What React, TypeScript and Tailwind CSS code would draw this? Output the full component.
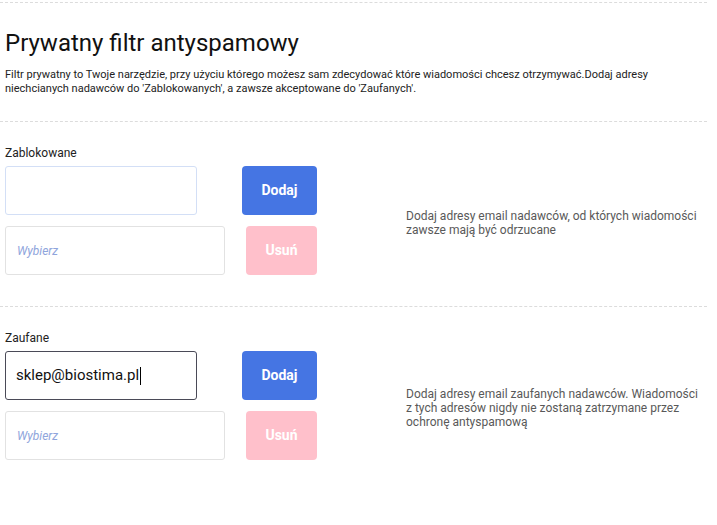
import React from "react";

type SectionProps = {
  label: string;
  value?: string;
  focused?: boolean;
  hint: string;
};

const FilterSection = ({ label, value, focused, hint }: SectionProps) => {
  return (
    <section className="pl-[5px]">
      <div className="mt-[24px] text-[12px] leading-[14px] text-[#222]">{label}</div>
      <div className="flex">
        <div className="w-[401px] shrink-0">
          {/* add row */}
          <div className="mt-[6px] flex">
            <div
              className={`flex h-[49px] w-[192px] items-center rounded-[3px] border bg-white pl-[10px] ${
                focused ? "border-[#4a4a57]" : "border-[#d3dff6]"
              }`}
            >
              {value && (
                <span className="flex items-center text-[15px] text-[#111]">
                  {value}
                  <span className="ml-[1px] inline-block h-[18px] w-[1px] bg-black" />
                </span>
              )}
            </div>
            <button
              type="button"
              className="ml-[45px] h-[49px] w-[75px] rounded-[4px] bg-[#4575e3] text-[14px] font-bold text-white"
            >
              Dodaj
            </button>
          </div>

          {/* remove row */}
          <div className="mt-[11px] flex">
            <div className="flex h-[49px] w-[220px] items-center rounded-[3px] border border-[#e2e2e2] bg-white pl-[11px]">
              <span className="text-[12px] italic text-[#8fa5dc]">Wybierz</span>
            </div>
            <button
              type="button"
              className="ml-[21px] h-[49px] w-[71px] rounded-[4px] bg-[#ffc0cb] text-[14px] font-bold text-white"
            >
              Usuń
            </button>
          </div>
        </div>

        <div className="flex flex-1 items-center pt-[10px] pr-[2px]">
          <p className="text-[12px] leading-[14px] text-[#595959]">{hint}</p>
        </div>
      </div>
    </section>
  );
};

export default function App() {
  return (
    <div className="min-h-[525px] w-[717px] bg-white font-['Roboto',sans-serif]">
      <div className="w-[707px] pb-[40px]">
        <div className="mt-[2px] border-t border-dashed border-[#dcdcdc]" />

        <div className="pl-[5px]">
          <h1 className="mt-[26px] text-[24px] leading-[28px] text-[#111]">
            Prywatny filtr antyspamowy
          </h1>
          <p className="mt-[11px] text-[11px] leading-[14px] text-[#222]">
            Filtr prywatny to Twoje narzędzie, przy użyciu którego możesz sam zdecydować które wiadomości chcesz
            otrzymywać.Dodaj adresy niechcianych nadawców do 'Zablokowanych', a zawsze akceptowane do
            'Zaufanych'.
          </p>
        </div>

        <div className="mt-[25px] border-t border-dashed border-[#dcdcdc]" />

        <FilterSection
          label="Zablokowane"
          hint="Dodaj adresy email nadawców, od których wiadomości zawsze mają być odrzucane"
        />

        <div className="mt-[31px] border-t border-dashed border-[#dcdcdc]" />

        <FilterSection
          label="Zaufane"
          value="sklep@biostima.pl"
          focused
          hint="Dodaj adresy email zaufanych nadawców. Wiadomości z tych adresów nigdy nie zostaną zatrzymane przez ochronę antyspamową"
        />
      </div>
    </div>
  );
}
